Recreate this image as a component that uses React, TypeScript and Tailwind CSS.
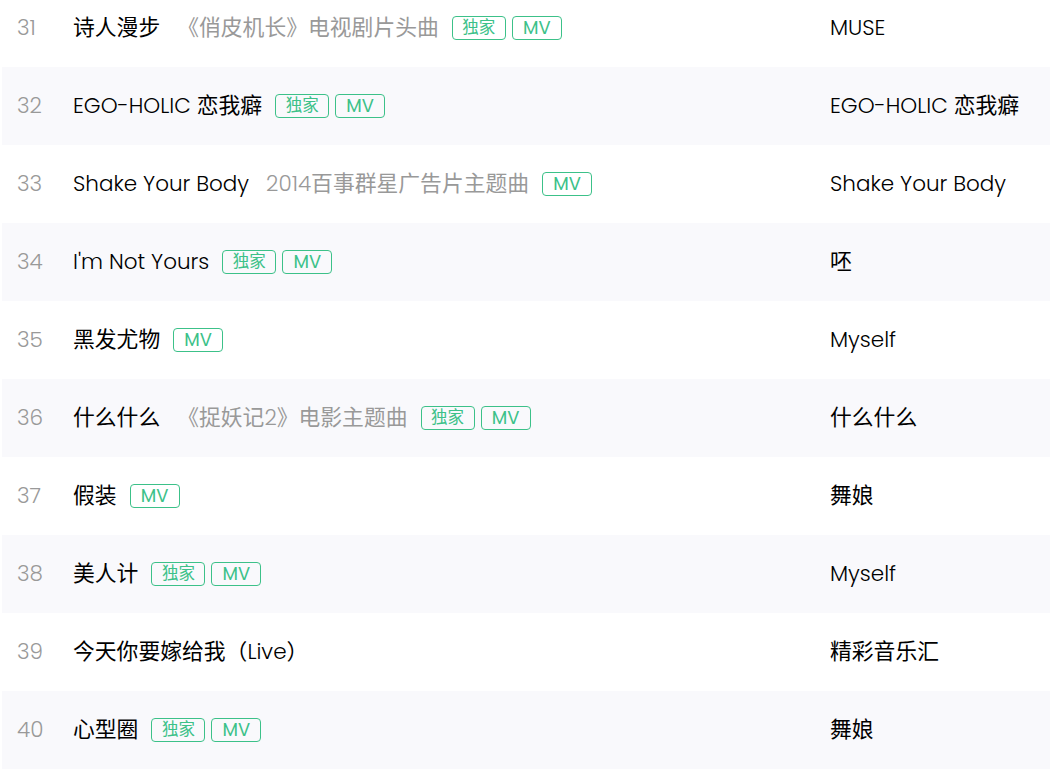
import React from "react";

type Row = { n: number; title: string; sub?: string; excl?: boolean; mv?: boolean; artist: string };

const rows: Row[] = [
  { n: 31, title: "诗人漫步", sub: "《俏皮机长》电视剧片头曲", excl: true, mv: true, artist: "MUSE" },
  { n: 32, title: "EGO-HOLIC 恋我癖", excl: true, mv: true, artist: "EGO-HOLIC 恋我癖" },
  { n: 33, title: "Shake Your Body", sub: "2014百事群星广告片主题曲", mv: true, artist: "Shake Your Body" },
  { n: 34, title: "I'm Not Yours", excl: true, mv: true, artist: "呸" },
  { n: 35, title: "黑发尤物", mv: true, artist: "Myself" },
  { n: 36, title: "什么什么", sub: "《捉妖记2》电影主题曲", excl: true, mv: true, artist: "什么什么" },
  { n: 37, title: "假装", mv: true, artist: "舞娘" },
  { n: 38, title: "美人计", excl: true, mv: true, artist: "Myself" },
  { n: 39, title: "今天你要嫁给我（Live）", artist: "精彩音乐汇" },
  { n: 40, title: "心型圈", excl: true, mv: true, artist: "舞娘" },
];

const cjk = /([\u3000-\u303f\u3400-\u9fff\uff00-\uffef]+)/;

const Mixed = ({ text }: { text: string }) => (
  <>
    {text.split(cjk).map((part, i) =>
      part === "" ? null : cjk.test(part) ? (
        <span key={i} className="text-[21.8px] font-normal">
          {part}
        </span>
      ) : (
        <span key={i}>{part}</span>
      )
    )}
  </>
);

const Tag = ({ children, wide }: { children: React.ReactNode; wide?: boolean }) => (
  <span
    className={`inline-flex h-[24px] items-center justify-center rounded-[4px] border-[1.5px] border-[#3cc189] text-[#3cc189] leading-none ${
      wide ? "w-[54px] text-[16.5px] font-normal" : "w-[50px] text-[18px] font-normal"
    }`}
  >
    {children}
  </span>
);

export default function App() {
  return (
    <div
      className="w-[1050px] h-[777px] overflow-hidden bg-white"
      style={{ fontFamily: '"Poppins", "Lato", "Noto Sans CJK SC", sans-serif' }}
    >
      <div className="-mt-[11px]">
        {rows.map((r, i) => (
          <div
            key={r.n}
            className={`ml-[2px] flex h-[78px] items-center text-[21.5px] font-light ${i % 2 === 1 ? "bg-[#f9f9fc]" : ""}`}
          >
            <div className="w-[71px] pl-[15px] text-[#999]">{r.n}</div>
            <div className="flex w-[757px] items-center text-black">
              <span className="whitespace-nowrap">
                <Mixed text={r.title} />
              </span>
              {r.sub && (
                <span className="ml-[17px] whitespace-nowrap text-[#999]">
                  <Mixed text={r.sub} />
                </span>
              )}
              {(r.excl || r.mv) && (
                <span className="ml-[13px] flex gap-[6px]">
                  {r.excl && <Tag wide>独家</Tag>}
                  {r.mv && <Tag>MV</Tag>}
                </span>
              )}
            </div>
            <div className="whitespace-nowrap text-black">
              <Mixed text={r.artist} />
            </div>
          </div>
        ))}
      </div>
    </div>
  );
}
